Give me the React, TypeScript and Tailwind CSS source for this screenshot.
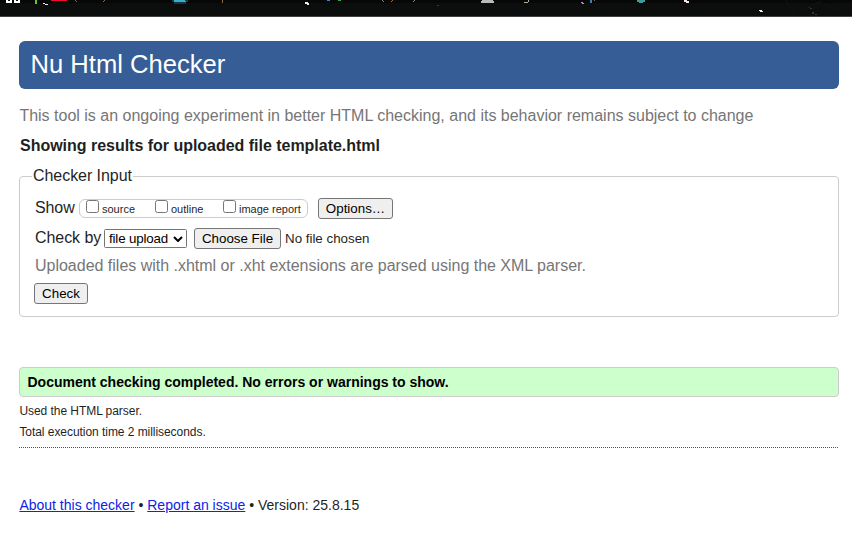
import type { ReactNode } from "react";

function BookmarkStrip() {
  return (
    <svg className="block h-[17px] w-[852px] shrink-0" viewBox="0 0 852 17" shapeRendering="crispEdges">
      <rect width="852" height="17" fill="#0c0d0d" />
      <rect width="852" height="3" fill="#070707" />
      <rect y="16" width="852" height="1" fill="#444444" />
      <path d="M6 0h6v3h-6zM14 0h6v3h-6z" fill="#fff" />
      <path d="M8 0h2v1h-2zM16 0h2v1h-2z" fill="#0c0d0d" />
      <rect x="35" width="2" height="4" fill="#62c926" />
      <path d="M43 3h2v1h3v1h-3v-1h-2z" fill="#e4eeee" />
      <path d="M51 0h16v1h-16z" fill="#f5092f" />
      <path d="M75 0h1v1h1v1h-1v-1h-1z" fill="#6d6558" />
      <path d="M104 0h1v1h-1v1h-1v-1h1z" fill="#8b6e50" />
      <path d="M172 0h16v2h-2v2h-12v-2h-2z" fill="#1b3443" />
      <path d="M174 0h11v1h1v1h-12z" fill="#34afca" />
      <rect x="222" width="1" height="3" fill="#8e6b40" />
      <path d="M305 2h3v1h1v2h-2v-1h-2z" fill="#eeeeee" />
      <rect x="327" width="3" height="1" fill="#4384d9" />
      <rect x="338" width="3" height="1" fill="#37a05a" />
      <path d="M382 0h1v1h1v1h-1v-1h-1z" fill="#7b8698" />
      <path d="M392 0h1v1h-1v1h-1v-1h1z" fill="#b06840" />
      <path d="M414 0h1v1h-1v1h-1v-1h1z" fill="#8a8e7b" />
      <rect x="437" y="5" width="2" height="1" fill="#383838" />
      <path d="M482 0h11v1h1v2h-13v-2h1z" fill="#b9b9b9" />
      <path d="M528 0h1v2h-1v1h-4v-1h4z" fill="#b4ad97" />
      <path d="M581 2h2v1h1v1h-2v-1h-1z" fill="#b398c1" />
      <rect x="590" width="1" height="3" fill="#3f7ea6" />
      <rect x="591" width="1" height="3" fill="#916a42" />
      <rect x="594" width="1" height="1" fill="#766554" />
      <path d="M637 0h8v2h-2v1h-4v-1h-2z" fill="#3d9c99" />
      <path d="M684 0h3v1h2v2h-3v-1h-2z" fill="#f5e6ed" />
      <path d="M759 10h3v1h1v1h-3v-1h-1z" fill="#e5f4e4" />
      <path d="M808 7h2v1h2v1h-2v-1h-2zM812 12h2v2h-2zM815 14h2v1h-2z" fill="#303731" />
      <path d="M785 0l10 13M800 11l22 -10M824 4l18 8" stroke="#0b1119" fill="none" />
    </svg>
  );
}

function Button({ children, className }: { children: ReactNode; className: string }) {
  return (
    <button
      type="button"
      className={`h-[21px] shrink-0 rounded-[3px] border border-[#767676] bg-[#efefef] text-center text-[13.333px] leading-[19px] whitespace-nowrap text-black ${className}`}
    >
      {children}
    </button>
  );
}

function Check({ label, className }: { label: string; className: string }) {
  return (
    <label className={`flex h-[18px] shrink-0 ${className}`}>
      <input
        type="checkbox"
        className="mt-px h-[13px] w-[13px] shrink-0 appearance-none rounded-[2.5px] border border-[#767676] bg-white"
      />
      <span className="ml-[3px] pt-[3px] text-[11px] leading-[14px] whitespace-nowrap">{label}</span>
    </label>
  );
}

export default function App() {
  return (
    <div className="flex h-[544px] w-[852px] flex-col overflow-hidden bg-white font-['Liberation_Sans',Arial,sans-serif] text-[#1f1f1f]">
      <BookmarkStrip />
      <main className="flex flex-col pt-6 pr-[13px] pl-[19px]">
        <h1 className="h-12 rounded-md bg-[#365d95] pl-[11.5px] text-[25.6px] leading-[46px] text-white">
          Nu Html Checker
        </h1>
        <p className="mt-[17px] h-5 pl-[0.4px] text-[16px] leading-5 whitespace-nowrap text-[#767676]">
          This tool is an ongoing experiment in better HTML checking, and its behavior remains subject to change
        </p>
        <h2 className="mt-[10px] h-5 pl-px text-[16px] leading-5 font-bold tracking-[-0.02px]">
          Showing results for uploaded file template.html
        </h2>
        <fieldset className="mt-[10px] h-[151px] rounded-[4px] border border-[#cccccc] pl-[14px]">
          <legend className="-ml-[2px] h-5 px-px text-[16px] leading-5 tracking-[-0.05px]">Checker Input</legend>
          <div className="mt-3 flex h-[21px]">
            <span className="w-[45px] shrink-0 pl-px text-[16px] leading-5 tracking-[-0.1px]">Show</span>
            <div className="mt-px flex h-[19px] w-[229px] shrink-0 rounded-[6px] border border-[#cccccc]">
              <Check label="source" className="-mt-px ml-[6px] w-[69px]" />
              <Check label="outline" className="-mt-px w-[68px]" />
              <Check label="image report" className="-mt-px" />
            </div>
            <Button className="ml-[10px] w-[75px]">Options…</Button>
          </div>
          <div className="mt-[9px] flex h-[21px]">
            <span className="w-[70px] shrink-0 pl-px text-[16px] leading-5 tracking-[-0.06px]">Check by</span>
            <button
              type="button"
              className="mt-px flex h-[19px] w-[83px] shrink-0 items-center rounded-[1.5px] border border-[#767676] bg-white pl-1 text-[13.333px] leading-[17px] tracking-[-0.15px] whitespace-nowrap text-black"
            >
              <span className="w-[64px] text-left">file upload</span>
              <svg className="h-[6px] w-[10px] shrink-0" viewBox="0 0 10 6">
                <path d="M1 1l4 4 4-4" fill="none" stroke="#000" strokeWidth="2" />
              </svg>
            </button>
            <Button className="ml-[7px] w-[87px]">Choose File</Button>
            <span className="ml-1 text-[13.333px] leading-[21px] whitespace-nowrap">No file chosen</span>
          </div>
          <p className="mt-[7px] h-5 pl-px text-[16px] leading-5 tracking-[-0.01px] text-[#767676]">
            Uploaded files with .xhtml or .xht extensions are parsed using the XML parser.
          </p>
          <div className="mt-[7px] flex">
            <Button className="w-[54px]">Check</Button>
          </div>
        </fieldset>
        <p className="mt-[50px] h-[30px] rounded-[4px] border border-[#cccccc] bg-[#ccffcc] pl-[7.5px] text-[14px] leading-[29px] font-bold text-black">
          Document checking completed. No errors or warnings to show.
        </p>
        <p className="mt-[6px] h-4 pl-[0.4px] text-[12px] leading-4 tracking-[-0.05px]">Used the HTML parser.</p>
        <p className="mt-[5px] h-4 pl-[0.4px] text-[12px] leading-4 tracking-[-0.05px]">
          Total execution time 2 milliseconds.
        </p>
        <div className="mt-[7px] h-px bg-[repeating-linear-gradient(90deg,#555_0px,#555_1px,#fff_1px,#fff_2px)]" />
        <footer className="mt-12 h-[18px] pl-[0.4px] text-[14px] leading-[18px] whitespace-nowrap">
          <a className="text-[#0b24e6] underline">About this checker</a> •{" "}
          <a className="text-[#0b24e6] underline">Report an issue</a> • Version: 25.8.15
        </footer>
      </main>
    </div>
  );
}
